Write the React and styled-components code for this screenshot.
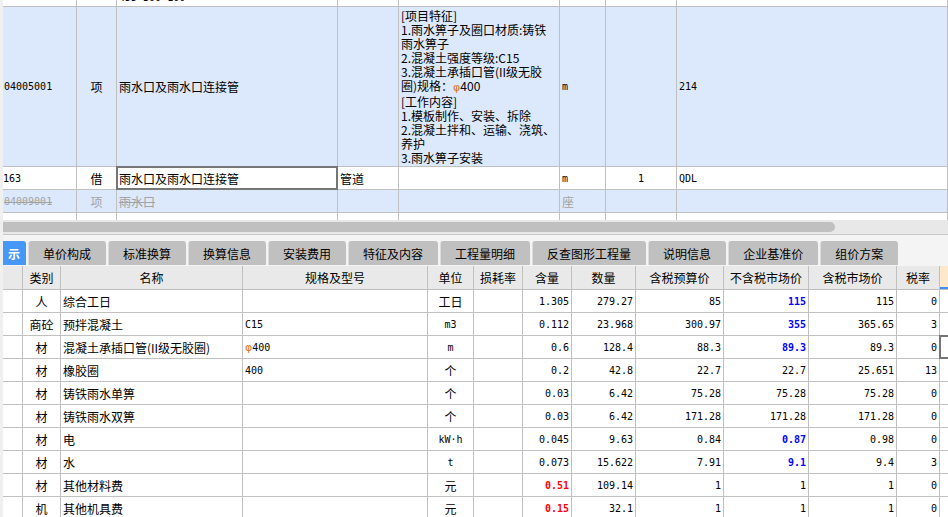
import React from 'react';
import styled, { createGlobalStyle, css } from 'styled-components';

const GlobalStyle = createGlobalStyle`
  html, body { margin: 0; padding: 0; background: #f0f0f0; overflow: hidden; }
  body { font-family: "Noto Sans CJK SC", "Noto Sans", sans-serif; font-size: 12px; color: #000; }
  * { box-sizing: border-box; }
`;

const Window = styled.div`
  width: 948px;
  height: 517px;
  overflow: hidden;
  padding-left: 3px;
  background: #f0f0f0;
  display: flex;
  flex-direction: column;
`;

const TopPane = styled.div`
  flex: none;
  height: 220px;
  overflow: hidden;
  background: #fff;
`;

const TOP_COLS = '74px 40px 221px 61px 161px 46px 71px 1fr';
const BOTTOM_COLS = '20px 38px 182px 185px 46px 49px 49px 64px 88px 85px 88px 43px 1fr';

const TopRow = styled.div`
  display: grid;
  grid-template-columns: ${TOP_COLS};
  height: ${(p) => p.$h}px;
  margin-top: ${(p) => p.$offset || 0}px;
  background: ${(p) => (p.$blue ? '#dce9fc' : '#fff')};
  border-bottom: 1px solid #c0c0c0;
`;

const Cell = styled.div`
  position: relative;
  display: flex;
  align-items: center;
  justify-content: ${(p) =>
    p.$align === 'center' ? 'center' : p.$align === 'right' ? 'flex-end' : 'flex-start'};
  padding: 0 2px;
  border-right: 1px solid #c0c0c0;
  white-space: nowrap;
  min-width: 0;
  ${(p) =>
    p.$mono &&
    css`
      font-family: "DejaVu Sans Mono", "Liberation Mono", monospace;
      font-size: 10px;
    `}
  ${(p) =>
    p.$struck &&
    css`
      color: #a3a3a3;
      text-decoration: line-through;
    `}
  ${(p) =>
    p.$tone === 'blue' &&
    css`
      color: #0000ff;
      font-weight: bold;
    `}
  ${(p) =>
    p.$tone === 'red' &&
    css`
      color: #ff0000;
      font-weight: bold;
    `}
  ${(p) =>
    p.$selected &&
    css`
      &::after {
        content: '';
        position: absolute;
        left: -1px;
        top: -1px;
        right: ${p.$openRight ? '-20px' : '-1px'};
        bottom: -1px;
        border: 2px solid #767676;
        pointer-events: none;
      }
    `}
`;

const Lines = styled.div`
  line-height: 14px;
  white-space: nowrap;
`;

const Phi = styled.span`
  color: #e0701c;
  font-family: "DejaVu Sans", sans-serif;
  font-size: 11px;
`;

const ScrollTrack = styled.div`
  flex: none;
  height: 15px;
  padding-top: 2px;
  background: #e8e8e8;
  border-bottom: 1px solid #c8c8c8;
`;

const ScrollThumb = styled.div`
  width: 832px;
  height: 10px;
  background: #c0c0c0;
  border-radius: 0 5px 5px 0;
`;

const TabBar = styled.div`
  flex: none;
  height: 31px;
  padding-top: 6px;
  display: flex;
  gap: 2px;
  background: #f4f4f4;
`;

const Tab = styled.div`
  flex: none;
  height: 24px;
  padding: 0 15px 0 14px;
  display: flex;
  align-items: center;
  justify-content: center;
  white-space: nowrap;
  background: #c0c0c0;
  border-left: 1px solid #dcdcdc;
  border-radius: 3px 3px 0 0;
  ${(p) =>
    p.$active &&
    css`
      width: 23px;
      padding: 0;
      justify-content: flex-end;
      overflow: hidden;
      background: #4598f7;
      border-left: none;
      border-radius: 0 3px 0 0;
      color: #fff;
      font-weight: bold;
      span { margin-right: 6px; }
    `}
`;

const HeadRow = styled.div`
  flex: none;
  display: grid;
  grid-template-columns: ${BOTTOM_COLS};
  height: 24px;
  background: #e9e9e9;
  border-bottom: 1px solid #c0c0c0;
`;

const HeadCell = styled.div`
  display: flex;
  align-items: center;
  justify-content: center;
  border-right: 1px solid #c0c0c0;
  white-space: nowrap;
  ${(p) =>
    p.$accent &&
    css`
      border-right: none;
      background: #fde8cc;
      box-shadow: inset 0 -2px 0 #3d8ff5;
    `}
`;

const DataRow = styled.div`
  flex: none;
  display: grid;
  grid-template-columns: ${BOTTOM_COLS};
  height: 23px;
  background: #fff;
  border-bottom: 1px solid #c0c0c0;
`;

const BottomPane = styled.div`
  flex: 1;
  display: flex;
  flex-direction: column;
  overflow: hidden;
  background: #fff;
`;

const headers = [
  '', '类别', '名称', '规格及型号', '单位', '损耗率', '含量', '数量',
  '含税预算价', '不含税市场价', '含税市场价', '税率',
];

const B = (v) => ({ v, tone: 'blue' });
const R = (v) => ({ v, tone: 'red' });

const rows = [
  ['人', '综合工日', '', '工日', '', '1.305', '279.27', '85', B('115'), '115', '0'],
  ['商砼', '预拌混凝土', 'C15', 'm3', '', '0.112', '23.968', '300.97', B('355'), '365.65', '3'],
  ['材', '混凝土承插口管(II级无胶圈)', 'phi', 'm', '', '0.6', '128.4', '88.3', B('89.3'), '89.3', '0'],
  ['材', '橡胶圈', '400', '个', '', '0.2', '42.8', '22.7', '22.7', '25.651', '13'],
  ['材', '铸铁雨水单箅', '', '个', '', '0.03', '6.42', '75.28', '75.28', '75.28', '0'],
  ['材', '铸铁雨水双箅', '', '个', '', '0.03', '6.42', '171.28', '171.28', '171.28', '0'],
  ['材', '电', '', 'kW·h', '', '0.045', '9.63', '0.84', B('0.87'), '0.98', '0'],
  ['材', '水', '', 't', '', '0.073', '15.622', '7.91', B('9.1'), '9.4', '3'],
  ['材', '其他材料费', '', '元', '', R('0.51'), '109.14', '1', '1', '1', '0'],
  ['机', '其他机具费', '', '元', '', R('0.15'), '32.1', '1', '1', '1', '0'],
];

const tabs = ['单价构成', '标准换算', '换算信息', '安装费用', '特征及内容', '工程量明细', '反查图形工程量', '说明信息', '企业基准价', '组价方案'];

const featureLines = [
  '[项目特征]',
  '1.雨水箅子及圈口材质:铸铁',
  '雨水箅子',
  '2.混凝土强度等级:C15',
  '3.混凝土承插口管(II级无胶',
  'PHI',
  '[工作内容]',
  '1.模板制作、安装、拆除',
  '2.混凝土拌和、运输、浇筑、',
  '养护',
  '3.雨水箅子安装',
];

const isLatin = (s) => /^[0-9A-Za-z.·*]+$/.test(s);

function Num({ value }) {
  const v = typeof value === 'object' ? value.v : value;
  const tone = typeof value === 'object' ? value.tone : undefined;
  return (
    <Cell $align="right" $mono $tone={tone}>
      {v}
    </Cell>
  );
}

export default function App() {
  return (
    <>
      <GlobalStyle />
      <Window>
        <TopPane>
          <TopRow $h={18} $offset={-11}>
            <Cell />
            <Cell />
            <Cell $mono>455*300*100</Cell>
            <Cell />
            <Cell />
            <Cell />
            <Cell />
            <Cell />
          </TopRow>
          <TopRow $h={160} $blue>
            <Cell $mono style={{ paddingLeft: 1 }}>04005001</Cell>
            <Cell $align="center">项</Cell>
            <Cell>雨水口及雨水口连接管</Cell>
            <Cell />
            <Cell>
              <Lines>
                {featureLines.map((l, i) =>
                  l === 'PHI' ? (
                    <div key={i}>
                      圈)规格：<Phi>φ</Phi>400
                    </div>
                  ) : (
                    <div key={i}>{l}</div>
                  )
                )}
              </Lines>
            </Cell>
            <Cell $mono>m</Cell>
            <Cell />
            <Cell $mono>214</Cell>
          </TopRow>
          <TopRow $h={23}>
            <Cell $mono style={{ paddingLeft: 0 }}>163</Cell>
            <Cell $align="center">借</Cell>
            <Cell $selected>雨水口及雨水口连接管</Cell>
            <Cell>管道</Cell>
            <Cell />
            <Cell $mono>m</Cell>
            <Cell $mono $align="center">1</Cell>
            <Cell $mono>QDL</Cell>
          </TopRow>
          <TopRow $h={23} $blue>
            <Cell $mono $struck style={{ paddingLeft: 1 }}>04009001</Cell>
            <Cell $align="center" $struck style={{ textDecoration: 'none' }}>项</Cell>
            <Cell $struck>雨水口</Cell>
            <Cell />
            <Cell />
            <Cell $struck style={{ textDecoration: 'none' }}>座</Cell>
            <Cell />
            <Cell />
          </TopRow>
          <TopRow $h={23}>
            <Cell />
            <Cell />
            <Cell />
            <Cell />
            <Cell />
            <Cell />
            <Cell />
            <Cell />
          </TopRow>
        </TopPane>

        <ScrollTrack>
          <ScrollThumb />
        </ScrollTrack>

        <TabBar>
          <Tab $active>
            <span>示</span>
          </Tab>
          {tabs.map((t) => (
            <Tab key={t}>{t}</Tab>
          ))}
        </TabBar>

        <BottomPane>
          <HeadRow>
            {headers.map((h, i) => (
              <HeadCell key={i}>{h}</HeadCell>
            ))}
            <HeadCell $accent />
          </HeadRow>
          {rows.map((r, i) => (
            <DataRow key={i}>
              <Cell />
              <Cell $align="center">{r[0]}</Cell>
              <Cell>{r[1]}</Cell>
              {r[2] === 'phi' ? (
                <Cell $mono>
                  <Phi>φ</Phi>400
                </Cell>
              ) : (
                <Cell $mono>{r[2]}</Cell>
              )}
              <Cell $align="center" $mono={isLatin(r[3])}>
                {r[3]}
              </Cell>
              <Cell />
              {r.slice(5).map((v, j) => (
                <Num key={j} value={v} />
              ))}
              <Cell $selected={i === 2} $openRight style={{ borderRight: 'none' }} />
            </DataRow>
          ))}
        </BottomPane>
      </Window>
    </>
  );
}
